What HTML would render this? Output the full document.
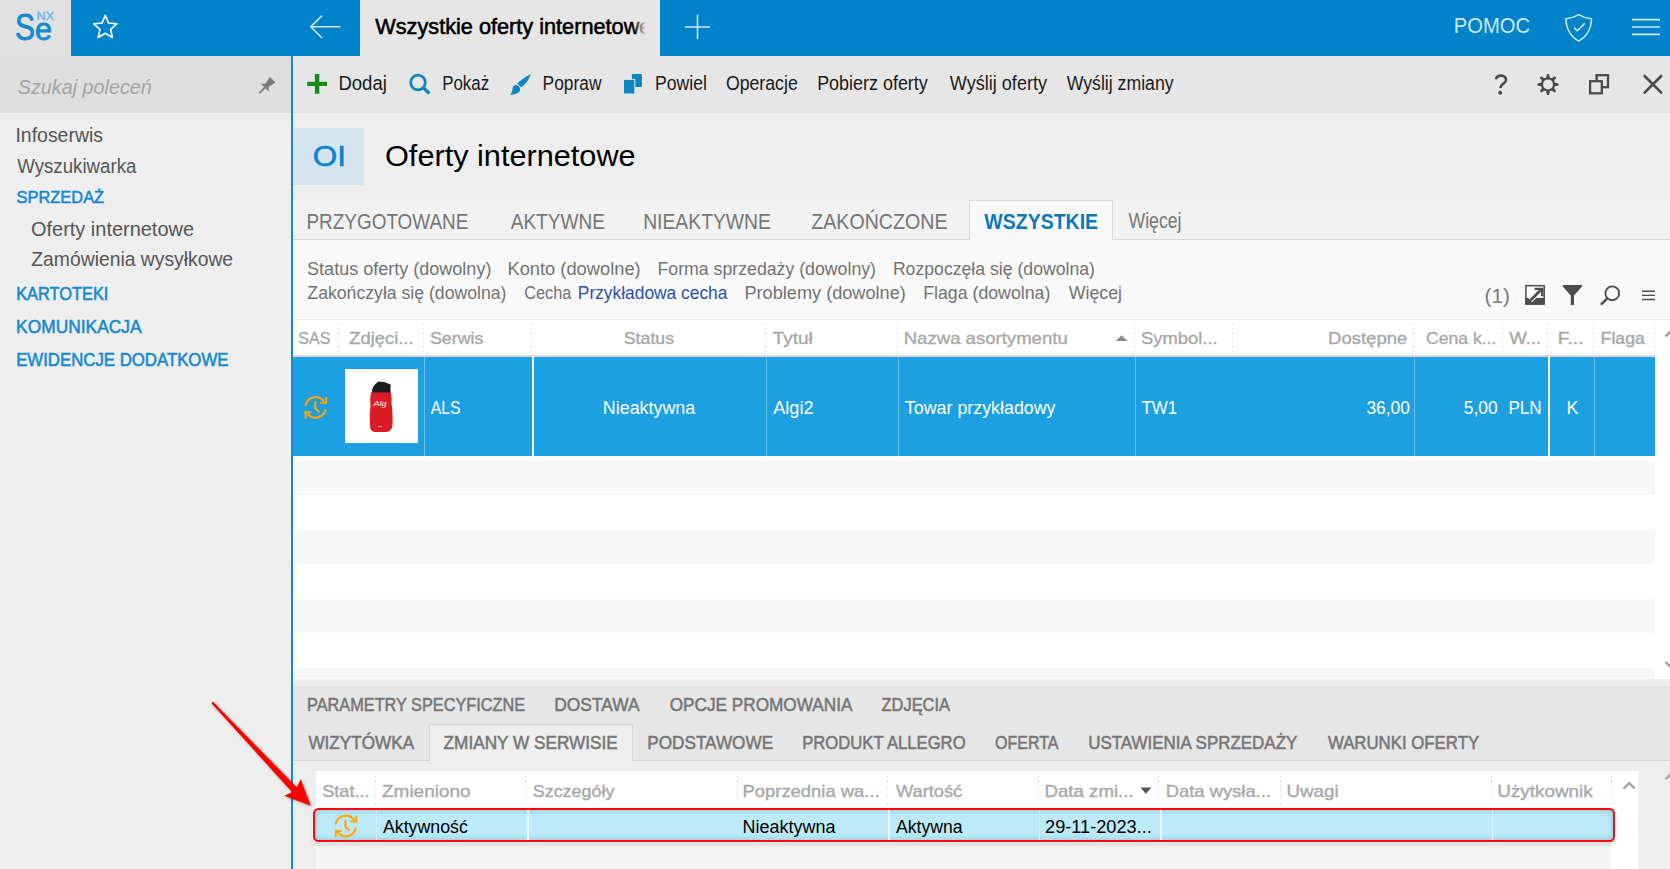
<!DOCTYPE html>
<html><head><meta charset="utf-8">
<style>
*{margin:0;padding:0;box-sizing:border-box}
html,body{width:1670px;height:869px;overflow:hidden;background:#eeeeee;font-family:"Liberation Sans",sans-serif;position:relative}
.a{position:absolute}
svg text{font-family:"Liberation Sans",sans-serif}
</style></head><body>
<div class="a" style="left:0;top:0;width:71px;height:56px;background:#e1e1e1"></div>
<div class="a" style="left:71px;top:0;width:289px;height:56px;background:#0083c9"></div>
<div class="a" style="left:360px;top:0;width:300px;height:56px;background:#e6e6e6"></div>
<div class="a" style="left:660px;top:0;width:1010px;height:56px;background:#0083c9"></div>
<div class="a" style="left:0;top:56px;width:291px;height:57px;background:#dedede"></div>
<div class="a" style="left:0;top:113px;width:291px;height:756px;background:#eeeeee"></div>
<div class="a" style="left:291px;top:56px;width:2px;height:813px;background:#1b87c5"></div>
<div class="a" style="left:293px;top:56px;width:1377px;height:57px;background:#e6e6e6"></div>
<div class="a" style="left:293px;top:113px;width:1377px;height:87px;background:#eeeeee"></div>
<div class="a" style="left:293px;top:128px;width:71px;height:57px;background:#d6e4ee"></div>
<div class="a" style="left:293px;top:200px;width:1377px;height:40px;background:#f2f2f2"></div>
<div class="a" style="left:293px;top:239px;width:1377px;height:1px;background:#d9d9d9"></div>
<div class="a" style="left:969px;top:200px;width:144px;height:40px;background:#f9f9f9;border:1px solid #d9d9d9;border-bottom:none"></div>
<div class="a" style="left:293px;top:240px;width:1377px;height:79px;background:#f9f9f9"></div>
<div class="a" style="left:293px;top:319px;width:1377px;height:1px;background:#e8e8e8"></div>
<div class="a" style="left:293px;top:320px;width:1377px;height:359px;background:#ffffff"></div>
<div class="a" style="left:293px;top:355px;width:1362px;height:2px;background:#dadada"></div>
<div class="a" style="left:338px;top:324px;width:1px;height:28px;background:repeating-linear-gradient(to bottom,#cbcbcb 0,#cbcbcb 1px,transparent 1px,transparent 4.5px)"></div>
<div class="a" style="left:423px;top:324px;width:1px;height:28px;background:repeating-linear-gradient(to bottom,#cbcbcb 0,#cbcbcb 1px,transparent 1px,transparent 4.5px)"></div>
<div class="a" style="left:531px;top:324px;width:1px;height:28px;background:repeating-linear-gradient(to bottom,#cbcbcb 0,#cbcbcb 1px,transparent 1px,transparent 4.5px)"></div>
<div class="a" style="left:765px;top:324px;width:1px;height:28px;background:repeating-linear-gradient(to bottom,#cbcbcb 0,#cbcbcb 1px,transparent 1px,transparent 4.5px)"></div>
<div class="a" style="left:897px;top:324px;width:1px;height:28px;background:repeating-linear-gradient(to bottom,#cbcbcb 0,#cbcbcb 1px,transparent 1px,transparent 4.5px)"></div>
<div class="a" style="left:1134px;top:324px;width:1px;height:28px;background:repeating-linear-gradient(to bottom,#cbcbcb 0,#cbcbcb 1px,transparent 1px,transparent 4.5px)"></div>
<div class="a" style="left:1232px;top:324px;width:1px;height:28px;background:repeating-linear-gradient(to bottom,#cbcbcb 0,#cbcbcb 1px,transparent 1px,transparent 4.5px)"></div>
<div class="a" style="left:1413px;top:324px;width:1px;height:28px;background:repeating-linear-gradient(to bottom,#cbcbcb 0,#cbcbcb 1px,transparent 1px,transparent 4.5px)"></div>
<div class="a" style="left:1502px;top:324px;width:1px;height:28px;background:repeating-linear-gradient(to bottom,#cbcbcb 0,#cbcbcb 1px,transparent 1px,transparent 4.5px)"></div>
<div class="a" style="left:1547px;top:324px;width:1px;height:28px;background:repeating-linear-gradient(to bottom,#cbcbcb 0,#cbcbcb 1px,transparent 1px,transparent 4.5px)"></div>
<div class="a" style="left:1593px;top:324px;width:1px;height:28px;background:repeating-linear-gradient(to bottom,#cbcbcb 0,#cbcbcb 1px,transparent 1px,transparent 4.5px)"></div>
<div class="a" style="left:1654px;top:324px;width:1px;height:28px;background:repeating-linear-gradient(to bottom,#cbcbcb 0,#cbcbcb 1px,transparent 1px,transparent 4.5px)"></div>
<div class="a" style="left:293px;top:357px;width:1362px;height:99px;background:#1da0e1"></div>
<div class="a" style="left:424px;top:357px;width:1px;height:99px;background:#6ec0ec"></div>
<div class="a" style="left:766px;top:357px;width:1px;height:99px;background:#6ec0ec"></div>
<div class="a" style="left:898px;top:357px;width:1px;height:99px;background:#6ec0ec"></div>
<div class="a" style="left:1135px;top:357px;width:1px;height:99px;background:#6ec0ec"></div>
<div class="a" style="left:1414px;top:357px;width:1px;height:99px;background:#6ec0ec"></div>
<div class="a" style="left:1594px;top:357px;width:1px;height:99px;background:#6ec0ec"></div>
<div class="a" style="left:532px;top:357px;width:2px;height:99px;background:#ffffff"></div>
<div class="a" style="left:1548px;top:357px;width:2px;height:99px;background:#ffffff"></div>
<div class="a" style="left:294px;top:461px;width:1361px;height:34px;background:#f7f7f7"></div>
<div class="a" style="left:294px;top:530px;width:1361px;height:34px;background:#f7f7f7"></div>
<div class="a" style="left:294px;top:599px;width:1361px;height:34px;background:#f7f7f7"></div>
<div class="a" style="left:294px;top:668px;width:1361px;height:11px;background:#f7f7f7"></div>
<div class="a" style="left:345px;top:369px;width:73px;height:74px;background:#ffffff"></div>
<svg class="a" style="left:345px;top:369px" width="73" height="74" viewBox="0 0 73 74"><path d="M27 24 Q26.5 17 33.5 12.5 Q40 12.3 45.8 15.8 Q45.2 19 45.6 24 Z" fill="#1d1d1d"/><path d="M26 23.5 L46 23.5 Q47 30 46.5 35 Q48 44 47.5 56 Q47 62.5 41 63 L30 63 Q25 62.5 25 57 Q24 46 25.5 36 Q24.5 30 26 23.5 Z" fill="#dc1c24"/><text x="28.5" y="37" font-size="8" fill="#fff" font-style="italic" font-family="Liberation Sans" textLength="13" lengthAdjust="spacingAndGlyphs">Alg</text><rect x="33" y="57" width="4" height="1" fill="#f3b0b0"/></svg>
<div class="a" style="left:293px;top:679px;width:1377px;height:7px;background:#eeeeee"></div>
<div class="a" style="left:293px;top:686px;width:1377px;height:74px;background:#e6e6e6"></div>
<div class="a" style="left:293px;top:760px;width:1377px;height:109px;background:#eeeeee"></div>
<div class="a" style="left:293px;top:760px;width:137px;height:1px;background:#d6d6d6"></div>
<div class="a" style="left:632px;top:760px;width:1038px;height:1px;background:#d6d6d6"></div>
<div class="a" style="left:429px;top:724px;width:204px;height:37px;background:#eeeeee;border:1px solid #d6d6d6;border-bottom:none"></div>
<div class="a" style="left:316px;top:771px;width:1322px;height:98px;background:#f5f5f5"></div>
<div class="a" style="left:316px;top:771px;width:1322px;height:36px;background:#ffffff"></div>
<div class="a" style="left:1611px;top:771px;width:27px;height:98px;background:#ffffff"></div>
<div class="a" style="left:375px;top:776px;width:1px;height:28px;background:repeating-linear-gradient(to bottom,#cbcbcb 0,#cbcbcb 1px,transparent 1px,transparent 4.5px)"></div>
<div class="a" style="left:525px;top:776px;width:1px;height:28px;background:repeating-linear-gradient(to bottom,#cbcbcb 0,#cbcbcb 1px,transparent 1px,transparent 4.5px)"></div>
<div class="a" style="left:737px;top:776px;width:1px;height:28px;background:repeating-linear-gradient(to bottom,#cbcbcb 0,#cbcbcb 1px,transparent 1px,transparent 4.5px)"></div>
<div class="a" style="left:887px;top:776px;width:1px;height:28px;background:repeating-linear-gradient(to bottom,#cbcbcb 0,#cbcbcb 1px,transparent 1px,transparent 4.5px)"></div>
<div class="a" style="left:1038px;top:776px;width:1px;height:28px;background:repeating-linear-gradient(to bottom,#cbcbcb 0,#cbcbcb 1px,transparent 1px,transparent 4.5px)"></div>
<div class="a" style="left:1158px;top:776px;width:1px;height:28px;background:repeating-linear-gradient(to bottom,#cbcbcb 0,#cbcbcb 1px,transparent 1px,transparent 4.5px)"></div>
<div class="a" style="left:1280px;top:776px;width:1px;height:28px;background:repeating-linear-gradient(to bottom,#cbcbcb 0,#cbcbcb 1px,transparent 1px,transparent 4.5px)"></div>
<div class="a" style="left:1491px;top:776px;width:1px;height:28px;background:repeating-linear-gradient(to bottom,#cbcbcb 0,#cbcbcb 1px,transparent 1px,transparent 4.5px)"></div>
<div class="a" style="left:1611px;top:776px;width:1px;height:28px;background:repeating-linear-gradient(to bottom,#cbcbcb 0,#cbcbcb 1px,transparent 1px,transparent 4.5px)"></div>
<div class="a" style="left:313px;top:808px;width:1302px;height:34px;border:2.3px solid #ff0505;border-radius:5.5px;background:#bdeaf9;box-shadow:inset 0 0 5px 1px rgba(100,170,200,0.5),0 0 1px 1px rgba(255,255,255,0.6),0 3px 5px rgba(0,0,0,0.12)"></div>
<div class="a" style="left:376px;top:810px;width:1px;height:30px;background:#d6eef8"></div>
<div class="a" style="left:1039px;top:810px;width:1px;height:30px;background:#d6eef8"></div>
<div class="a" style="left:1492px;top:810px;width:1px;height:30px;background:#d6eef8"></div>
<div class="a" style="left:527px;top:810px;width:2px;height:30px;background:#eef8fc"></div>
<div class="a" style="left:888px;top:810px;width:2px;height:30px;background:#eef8fc"></div>
<div class="a" style="left:1160px;top:810px;width:2px;height:30px;background:#eef8fc"></div>
<svg class="a" style="left:0;top:0" width="1670" height="869" viewBox="0 0 1670 869">
<text x="15.0" y="39.6" font-size="36.5" fill="#1589d0" stroke="#1589d0" stroke-width="0.8" textLength="20" lengthAdjust="spacingAndGlyphs">S</text>
<text x="35.0" y="39.6" font-size="31" fill="#1589d0" stroke="#1589d0" stroke-width="0.8" textLength="17" lengthAdjust="spacingAndGlyphs">e</text>
<text x="36.6" y="20.2" font-size="10.8" fill="#6db8e6" stroke="#6db8e6" stroke-width="0.4" textLength="17.6" lengthAdjust="spacingAndGlyphs">NX</text>
<polygon points="105.30,15.40 108.59,23.07 116.90,23.83 110.63,29.33 112.47,37.47 105.30,33.20 98.13,37.47 99.97,29.33 93.70,23.83 102.01,23.07" fill="none" stroke="#ffffff" stroke-width="1.6" stroke-linejoin="round"/>
<path d="M310.8,26.8 L340.6,26.8 M322,15.6 L310.8,26.8 L322,38" fill="none" stroke="#d2e8f6" stroke-width="1.5"/>
<path d="M685,27 L710,27 M697.5,14.7 L697.5,39.1" fill="none" stroke="#d2e8f6" stroke-width="1.5"/>
<path d="M1578.7,14.6 Q1572.5,18.3 1565.9,18.8 C1566.2,30 1571,36.8 1578.7,41 C1586.4,36.8 1591.2,30 1591.5,18.8 Q1584.9,18.3 1578.7,14.6 Z" fill="none" stroke="#d2e8f6" stroke-width="1.5" stroke-linejoin="round"/>
<path d="M1574.1,27.6 L1577.4,30.7 L1584.7,23.4" fill="none" stroke="#d2e8f6" stroke-width="1.5"/>
<path d="M1632,19.6 L1660,19.6 M1632,27 L1660,27 M1632,34.4 L1660,34.4" stroke="#d2e8f6" stroke-width="1.7"/>
<g transform="translate(272.5,79.9) rotate(45)" fill="#7a7a7a"><path d="M-3.9,-0.3 L3.9,-0.3 L2.3,7.8 L5.6,10.9 L-5.6,10.9 L-2.3,7.8 Z"/><rect x="-0.95" y="10" width="1.9" height="8.6"/></g>
<path d="M307.2,83.9 L327,83.9 M317.1,74 L317.1,93.7" stroke="#168a16" stroke-width="4.4"/>
<circle cx="418" cy="82.5" r="7.3" fill="none" stroke="#0e86be" stroke-width="2.8"/><path d="M423.3,87.6 L429.3,93.5" stroke="#0e86be" stroke-width="3.4"/>
<path d="M530.8,74.2 Q522.5,77.8 517.3,83.7 L521.3,87.3 Q528,82.3 530.8,74.2 Z" fill="#0e86be"/><path d="M515.2,85.1 C518,84.8 520.6,87.2 520.1,90.2 C519.6,93 514.5,94.8 509.9,94.8 C511.6,93.3 512.2,91.5 512.4,89.5 C512.6,87.3 513.3,85.4 515.2,85.1 Z" fill="#0e86be"/>
<rect x="631.9" y="74" width="10" height="13" fill="#0e86be"/><rect x="623" y="78.9" width="12.3" height="15.6" fill="#e6e6e6"/><rect x="624" y="79.9" width="10.3" height="13.6" fill="#0e86be"/>
<path d="M1496,79.3 C1496.4,76.7 1498.4,75.6 1501,75.6 C1504.3,75.6 1506.1,77.6 1506.1,80 C1506.1,83.4 1500.4,84 1500.4,88" fill="none" stroke="#4a4a4a" stroke-width="2.6"/><circle cx="1500.2" cy="92.8" r="2" fill="#4a4a4a"/>
<g transform="translate(1548,84.4)" fill="#4a4a4a"><path d="M-2.0,-6.0 L-1.0,-10.5 L1.0,-10.5 L2.0,-6.0 Z" transform="rotate(0)"/><path d="M-2.0,-6.0 L-1.0,-10.5 L1.0,-10.5 L2.0,-6.0 Z" transform="rotate(45)"/><path d="M-2.0,-6.0 L-1.0,-10.5 L1.0,-10.5 L2.0,-6.0 Z" transform="rotate(90)"/><path d="M-2.0,-6.0 L-1.0,-10.5 L1.0,-10.5 L2.0,-6.0 Z" transform="rotate(135)"/><path d="M-2.0,-6.0 L-1.0,-10.5 L1.0,-10.5 L2.0,-6.0 Z" transform="rotate(180)"/><path d="M-2.0,-6.0 L-1.0,-10.5 L1.0,-10.5 L2.0,-6.0 Z" transform="rotate(225)"/><path d="M-2.0,-6.0 L-1.0,-10.5 L1.0,-10.5 L2.0,-6.0 Z" transform="rotate(270)"/><path d="M-2.0,-6.0 L-1.0,-10.5 L1.0,-10.5 L2.0,-6.0 Z" transform="rotate(315)"/><circle r="6.05" fill="none" stroke="#4a4a4a" stroke-width="2.1"/></g>
<rect x="1596.6" y="75.2" width="11.4" height="12" fill="none" stroke="#4a4a4a" stroke-width="2.3"/><rect x="1590.1" y="81.2" width="11.7" height="12.1" fill="#e6e6e6" stroke="#4a4a4a" stroke-width="2.3"/>
<path d="M1644.6,76 L1661.2,92.6 M1661.2,76 L1644.6,92.6" stroke="#4a4a4a" stroke-width="2.6" stroke-linecap="round"/>
<rect x="1525.9" y="285.7" width="18.3" height="18.3" fill="#ffffff" stroke="#4d4d4d" stroke-width="1.5"/><rect x="1525.2" y="297.9" width="19.7" height="6.8" fill="#4d4d4d"/><path d="M1530.3,300.4 L1540.5,290.3" stroke="#ffffff" stroke-width="5"/><path d="M1530.3,300.4 L1540.5,290.3" stroke="#4d4d4d" stroke-width="2.8"/><path d="M1534.6,288.9 L1542.2,288.9 L1542.2,296.3" fill="none" stroke="#4d4d4d" stroke-width="2.4"/>
<path d="M1562.8,285 L1582,285 L1582,286.5 L1574,295.5 L1574,305 L1570.8,305 L1570.8,295.5 L1562.8,286.5 Z" fill="#4d4d4d"/>
<circle cx="1612.3" cy="293.3" r="6.9" fill="none" stroke="#4d4d4d" stroke-width="1.9"/><path d="M1607.3,298.4 L1601,304.6" stroke="#4d4d4d" stroke-width="2.4"/>
<path d="M1642,291.3 L1655,291.3 M1642,295.4 L1655,295.4 M1642,299.5 L1655,299.5" stroke="#4d4d4d" stroke-width="1.4"/>
<path d="M1115.7,341.1 L1121.55,335.2 L1127.4,341.1 Z" fill="#8a8a8a"/>
<path d="M1140.3,787.5 L1151.5,787.5 L1145.9,793.8 Z" fill="#555555"/>
<g transform="translate(298,390) scale(1.0)"><g fill="none" stroke="#ffa500" stroke-width="2.1"><path d="M7.4,16.0 A10.3,10.3 0 0 1 25.9,11.4"/><path d="M27.7,19.3 A10.3,10.3 0 0 1 9.6,23.9"/><path d="M17.2,11.2 L17.2,18.2 L21.4,22.3"/></g><g fill="#ffa500"><rect x="27.1" y="7" width="1.95" height="6.9"/><rect x="22.2" y="12" width="6.85" height="1.9"/><rect x="6.6" y="21.5" width="2.05" height="7.1"/><rect x="6.6" y="21.5" width="6.7" height="1.85"/></g></g>
<g transform="translate(328.2,808.5) scale(1.0)"><g fill="none" stroke="#ffa500" stroke-width="2.1"><path d="M7.4,16.0 A10.3,10.3 0 0 1 25.9,11.4"/><path d="M27.7,19.3 A10.3,10.3 0 0 1 9.6,23.9"/><path d="M17.2,11.2 L17.2,18.2 L21.4,22.3"/></g><g fill="#ffa500"><rect x="27.1" y="7" width="1.95" height="6.9"/><rect x="22.2" y="12" width="6.85" height="1.9"/><rect x="6.6" y="21.5" width="2.05" height="7.1"/><rect x="6.6" y="21.5" width="6.7" height="1.85"/></g></g>
<path d="M1665.6,336.6 L1671.5,330" fill="none" stroke="#a0a0a0" stroke-width="2.3"/>
<path d="M1665.6,662 L1671.5,668" fill="none" stroke="#a0a0a0" stroke-width="2.3"/>
<path d="M1623.6,788.6 L1629.2,783 L1634.8,788.6" fill="none" stroke="#a3a3a3" stroke-width="2.2"/>
<path d="M1665.6,779.2 L1671.5,773" fill="none" stroke="#a8a8a8" stroke-width="2.3"/>
<g style="filter:drop-shadow(1px 1.5px 1.5px rgba(0,0,0,0.35))"><path d="M213.7,702.4 L296.8,787.2 L300.7,779.2 L310.8,805.8 L284.2,795.8 L292.2,792.2 L212.1,704 Z" fill="#ff0000"/><circle cx="212.9" cy="703.2" r="1.15" fill="#ff0000"/></g>
<text x="375.30" y="33.70" font-size="21.30" textLength="276.07" lengthAdjust="spacingAndGlyphs" fill="#000000" stroke="#000000" stroke-width="0.55">Wszystkie oferty internetowe</text>
<text x="1453.78" y="33.00" font-size="21.74" textLength="76.28" lengthAdjust="spacingAndGlyphs" fill="#cfe6f5">POMOC</text>
<text x="338.42" y="90.10" font-size="19.57" textLength="48.44" lengthAdjust="spacingAndGlyphs" fill="#1a1a1a">Dodaj</text>
<text x="442.15" y="90.10" font-size="19.57" textLength="47.00" lengthAdjust="spacingAndGlyphs" fill="#1a1a1a">Pokaż</text>
<text x="542.61" y="90.10" font-size="19.57" textLength="58.92" lengthAdjust="spacingAndGlyphs" fill="#1a1a1a">Popraw</text>
<text x="654.99" y="90.10" font-size="19.57" textLength="51.88" lengthAdjust="spacingAndGlyphs" fill="#1a1a1a">Powiel</text>
<text x="725.90" y="90.10" font-size="19.57" textLength="71.85" lengthAdjust="spacingAndGlyphs" fill="#1a1a1a">Operacje</text>
<text x="817.17" y="90.10" font-size="19.57" textLength="110.63" lengthAdjust="spacingAndGlyphs" fill="#1a1a1a">Pobierz oferty</text>
<text x="949.80" y="90.10" font-size="19.57" textLength="97.21" lengthAdjust="spacingAndGlyphs" fill="#1a1a1a">Wyślij oferty</text>
<text x="1066.70" y="90.10" font-size="19.57" textLength="106.94" lengthAdjust="spacingAndGlyphs" fill="#1a1a1a">Wyślij zmiany</text>
<text x="17.71" y="93.50" font-size="20.72" textLength="134.13" lengthAdjust="spacingAndGlyphs" fill="#a3a3a3" font-style="italic">Szukaj poleceń</text>
<text x="15.45" y="142.00" font-size="20.14" textLength="87.56" lengthAdjust="spacingAndGlyphs" fill="#555555">Infoserwis</text>
<text x="17.20" y="172.90" font-size="19.71" textLength="119.23" lengthAdjust="spacingAndGlyphs" fill="#555555">Wyszukiwarka</text>
<text x="16.46" y="203.30" font-size="17.39" textLength="87.72" lengthAdjust="spacingAndGlyphs" fill="#1589d0" stroke="#1589d0" stroke-width="0.55">SPRZEDAŻ</text>
<text x="31.00" y="236.10" font-size="20.14" textLength="163.01" lengthAdjust="spacingAndGlyphs" fill="#555555">Oferty internetowe</text>
<text x="31.32" y="265.60" font-size="19.71" textLength="201.81" lengthAdjust="spacingAndGlyphs" fill="#555555">Zamówienia wysyłkowe</text>
<text x="16.19" y="299.70" font-size="17.68" textLength="92.23" lengthAdjust="spacingAndGlyphs" fill="#1589d0" stroke="#1589d0" stroke-width="0.55">KARTOTEKI</text>
<text x="16.11" y="332.70" font-size="17.68" textLength="125.45" lengthAdjust="spacingAndGlyphs" fill="#1589d0" stroke="#1589d0" stroke-width="0.55">KOMUNIKACJA</text>
<text x="16.16" y="365.80" font-size="17.68" textLength="212.28" lengthAdjust="spacingAndGlyphs" fill="#1589d0" stroke="#1589d0" stroke-width="0.55">EWIDENCJE DODATKOWE</text>
<text x="312.88" y="165.60" font-size="28.84" textLength="33.21" lengthAdjust="spacingAndGlyphs" fill="#0a84cc" stroke="#0a84cc" stroke-width="0.55">OI</text>
<text x="385.02" y="165.60" font-size="30.29" textLength="250.62" lengthAdjust="spacingAndGlyphs" fill="#000000">Oferty internetowe</text>
<text x="306.49" y="229.30" font-size="22.32" textLength="161.90" lengthAdjust="spacingAndGlyphs" fill="#767676">PRZYGOTOWANE</text>
<text x="510.70" y="229.30" font-size="22.32" textLength="94.26" lengthAdjust="spacingAndGlyphs" fill="#767676">AKTYWNE</text>
<text x="643.15" y="229.30" font-size="22.32" textLength="127.76" lengthAdjust="spacingAndGlyphs" fill="#767676">NIEAKTYWNE</text>
<text x="811.31" y="229.30" font-size="22.32" textLength="136.17" lengthAdjust="spacingAndGlyphs" fill="#767676">ZAKOŃCZONE</text>
<text x="984.30" y="228.80" font-size="21.59" textLength="113.85" lengthAdjust="spacingAndGlyphs" fill="#0a7ab8" font-weight="bold">WSZYSTKIE</text>
<text x="1128.50" y="228.20" font-size="21.16" textLength="52.96" lengthAdjust="spacingAndGlyphs" fill="#767676">Więcej</text>
<text x="307.09" y="274.80" font-size="18.70" textLength="184.33" lengthAdjust="spacingAndGlyphs" fill="#737373">Status oferty (dowolny)</text>
<text x="507.44" y="274.80" font-size="18.70" textLength="133.22" lengthAdjust="spacingAndGlyphs" fill="#737373">Konto (dowolne)</text>
<text x="657.48" y="274.80" font-size="18.70" textLength="218.54" lengthAdjust="spacingAndGlyphs" fill="#737373">Forma sprzedaży (dowolny)</text>
<text x="892.89" y="274.80" font-size="18.70" textLength="202.09" lengthAdjust="spacingAndGlyphs" fill="#737373">Rozpoczęła się (dowolna)</text>
<text x="307.37" y="298.50" font-size="18.70" textLength="199.15" lengthAdjust="spacingAndGlyphs" fill="#737373">Zakończyła się (dowolna)</text>
<text x="524.28" y="298.50" font-size="18.70" textLength="47.15" lengthAdjust="spacingAndGlyphs" fill="#737373">Cecha</text>
<text x="577.81" y="298.50" font-size="18.70" textLength="149.61" lengthAdjust="spacingAndGlyphs" fill="#2a50b4">Przykładowa cecha</text>
<text x="744.45" y="298.50" font-size="18.70" textLength="161.40" lengthAdjust="spacingAndGlyphs" fill="#737373">Problemy (dowolne)</text>
<text x="923.18" y="298.50" font-size="18.70" textLength="127.21" lengthAdjust="spacingAndGlyphs" fill="#737373">Flaga (dowolna)</text>
<text x="1068.70" y="298.50" font-size="18.70" textLength="53.26" lengthAdjust="spacingAndGlyphs" fill="#737373">Więcej</text>
<text x="1484.56" y="302.90" font-size="19.42" textLength="25.22" lengthAdjust="spacingAndGlyphs" fill="#7a7a7a">(1)</text>
<text x="298.28" y="344.40" font-size="17.39" textLength="32.08" lengthAdjust="spacingAndGlyphs" fill="#a9a9a9" stroke="#a9a9a9" stroke-width="0.4">SAS</text>
<text x="349.35" y="344.40" font-size="17.39" textLength="64.23" lengthAdjust="spacingAndGlyphs" fill="#a9a9a9" stroke="#a9a9a9" stroke-width="0.4">Zdjęci...</text>
<text x="429.90" y="344.40" font-size="17.39" textLength="53.54" lengthAdjust="spacingAndGlyphs" fill="#a9a9a9" stroke="#a9a9a9" stroke-width="0.4">Serwis</text>
<text x="623.80" y="344.40" font-size="17.39" textLength="50.22" lengthAdjust="spacingAndGlyphs" fill="#a9a9a9" stroke="#a9a9a9" stroke-width="0.4">Status</text>
<text x="772.82" y="344.40" font-size="17.39" textLength="40.01" lengthAdjust="spacingAndGlyphs" fill="#a9a9a9" stroke="#a9a9a9" stroke-width="0.4">Tytuł</text>
<text x="903.72" y="344.40" font-size="17.39" textLength="164.03" lengthAdjust="spacingAndGlyphs" fill="#a9a9a9" stroke="#a9a9a9" stroke-width="0.4">Nazwa asortymentu</text>
<text x="1140.97" y="344.40" font-size="17.39" textLength="76.65" lengthAdjust="spacingAndGlyphs" fill="#a9a9a9" stroke="#a9a9a9" stroke-width="0.4">Symbol...</text>
<text x="1328.12" y="344.40" font-size="17.39" textLength="79.13" lengthAdjust="spacingAndGlyphs" fill="#a9a9a9" stroke="#a9a9a9" stroke-width="0.4">Dostępne</text>
<text x="1426.12" y="344.40" font-size="17.39" textLength="70.20" lengthAdjust="spacingAndGlyphs" fill="#a9a9a9" stroke="#a9a9a9" stroke-width="0.4">Cena k...</text>
<text x="1509.30" y="344.40" font-size="17.39" textLength="31.91" lengthAdjust="spacingAndGlyphs" fill="#a9a9a9" stroke="#a9a9a9" stroke-width="0.4">W...</text>
<text x="1557.86" y="344.40" font-size="17.39" textLength="25.64" lengthAdjust="spacingAndGlyphs" fill="#a9a9a9" stroke="#a9a9a9" stroke-width="0.4">F...</text>
<text x="1600.58" y="344.40" font-size="17.39" textLength="44.36" lengthAdjust="spacingAndGlyphs" fill="#a9a9a9" stroke="#a9a9a9" stroke-width="0.4">Flaga</text>
<text x="430.80" y="414.20" font-size="19.13" textLength="29.84" lengthAdjust="spacingAndGlyphs" fill="#ffffff">ALS</text>
<text x="602.87" y="414.20" font-size="19.13" textLength="92.32" lengthAdjust="spacingAndGlyphs" fill="#ffffff">Nieaktywna</text>
<text x="773.20" y="414.20" font-size="19.13" textLength="40.39" lengthAdjust="spacingAndGlyphs" fill="#ffffff">Algi2</text>
<text x="904.84" y="414.20" font-size="19.13" textLength="150.71" lengthAdjust="spacingAndGlyphs" fill="#ffffff">Towar przykładowy</text>
<text x="1141.46" y="414.20" font-size="19.13" textLength="35.71" lengthAdjust="spacingAndGlyphs" fill="#ffffff">TW1</text>
<text x="1366.39" y="414.20" font-size="19.13" textLength="43.46" lengthAdjust="spacingAndGlyphs" fill="#ffffff">36,00</text>
<text x="1463.80" y="414.20" font-size="19.13" textLength="33.83" lengthAdjust="spacingAndGlyphs" fill="#ffffff">5,00</text>
<text x="1508.43" y="414.20" font-size="19.13" textLength="33.26" lengthAdjust="spacingAndGlyphs" fill="#ffffff">PLN</text>
<text x="1566.57" y="414.20" font-size="19.13" textLength="11.96" lengthAdjust="spacingAndGlyphs" fill="#ffffff">K</text>
<text x="307.10" y="710.60" font-size="18.55" textLength="217.99" lengthAdjust="spacingAndGlyphs" fill="#767676" stroke="#767676" stroke-width="0.55">PARAMETRY SPECYFICZNE</text>
<text x="554.31" y="710.60" font-size="18.55" textLength="85.23" lengthAdjust="spacingAndGlyphs" fill="#767676" stroke="#767676" stroke-width="0.55">DOSTAWA</text>
<text x="669.73" y="710.60" font-size="18.55" textLength="182.68" lengthAdjust="spacingAndGlyphs" fill="#767676" stroke="#767676" stroke-width="0.55">OPCJE PROMOWANIA</text>
<text x="881.51" y="710.60" font-size="18.55" textLength="68.53" lengthAdjust="spacingAndGlyphs" fill="#767676" stroke="#767676" stroke-width="0.55">ZDJĘCIA</text>
<text x="308.40" y="748.70" font-size="18.55" textLength="105.72" lengthAdjust="spacingAndGlyphs" fill="#767676" stroke="#767676" stroke-width="0.55">WIZYTÓWKA</text>
<text x="443.58" y="748.70" font-size="18.55" textLength="174.12" lengthAdjust="spacingAndGlyphs" fill="#767676" stroke="#767676" stroke-width="0.55">ZMIANY W SERWISIE</text>
<text x="647.23" y="748.70" font-size="18.55" textLength="125.91" lengthAdjust="spacingAndGlyphs" fill="#767676" stroke="#767676" stroke-width="0.55">PODSTAWOWE</text>
<text x="802.17" y="748.70" font-size="18.55" textLength="163.43" lengthAdjust="spacingAndGlyphs" fill="#767676" stroke="#767676" stroke-width="0.55">PRODUKT ALLEGRO</text>
<text x="994.98" y="748.70" font-size="18.55" textLength="63.58" lengthAdjust="spacingAndGlyphs" fill="#767676" stroke="#767676" stroke-width="0.55">OFERTA</text>
<text x="1088.23" y="748.70" font-size="18.55" textLength="209.12" lengthAdjust="spacingAndGlyphs" fill="#767676" stroke="#767676" stroke-width="0.55">USTAWIENIA SPRZEDAŻY</text>
<text x="1327.90" y="748.70" font-size="18.55" textLength="151.25" lengthAdjust="spacingAndGlyphs" fill="#767676" stroke="#767676" stroke-width="0.55">WARUNKI OFERTY</text>
<text x="322.18" y="796.90" font-size="17.39" textLength="47.40" lengthAdjust="spacingAndGlyphs" fill="#a9a9a9" stroke="#a9a9a9" stroke-width="0.4">Stat...</text>
<text x="382.03" y="796.90" font-size="17.39" textLength="88.51" lengthAdjust="spacingAndGlyphs" fill="#a9a9a9" stroke="#a9a9a9" stroke-width="0.4">Zmieniono</text>
<text x="532.79" y="796.90" font-size="17.39" textLength="81.56" lengthAdjust="spacingAndGlyphs" fill="#a9a9a9" stroke="#a9a9a9" stroke-width="0.4">Szczegóły</text>
<text x="742.53" y="796.90" font-size="17.39" textLength="137.11" lengthAdjust="spacingAndGlyphs" fill="#a9a9a9" stroke="#a9a9a9" stroke-width="0.4">Poprzednia wa...</text>
<text x="895.90" y="796.90" font-size="17.39" textLength="66.36" lengthAdjust="spacingAndGlyphs" fill="#a9a9a9" stroke="#a9a9a9" stroke-width="0.4">Wartość</text>
<text x="1044.51" y="796.90" font-size="17.39" textLength="89.15" lengthAdjust="spacingAndGlyphs" fill="#a9a9a9" stroke="#a9a9a9" stroke-width="0.4">Data zmi...</text>
<text x="1165.73" y="796.90" font-size="17.39" textLength="105.21" lengthAdjust="spacingAndGlyphs" fill="#a9a9a9" stroke="#a9a9a9" stroke-width="0.4">Data wysła...</text>
<text x="1286.49" y="796.90" font-size="17.39" textLength="52.20" lengthAdjust="spacingAndGlyphs" fill="#a9a9a9" stroke="#a9a9a9" stroke-width="0.4">Uwagi</text>
<text x="1497.18" y="796.90" font-size="17.39" textLength="95.56" lengthAdjust="spacingAndGlyphs" fill="#a9a9a9" stroke="#a9a9a9" stroke-width="0.4">Użytkownik</text>
<text x="382.90" y="833.20" font-size="18.12" textLength="84.93" lengthAdjust="spacingAndGlyphs" fill="#000000">Aktywność</text>
<text x="742.56" y="833.20" font-size="18.12" textLength="92.83" lengthAdjust="spacingAndGlyphs" fill="#000000">Nieaktywna</text>
<text x="896.00" y="833.20" font-size="18.12" textLength="66.50" lengthAdjust="spacingAndGlyphs" fill="#000000">Aktywna</text>
<text x="1045.09" y="833.20" font-size="18.12" textLength="106.74" lengthAdjust="spacingAndGlyphs" fill="#000000">29-11-2023...</text>
<defs><linearGradient id="fd" x1="0" x2="1"><stop offset="0" stop-color="#e6e6e6" stop-opacity="0"/><stop offset="1" stop-color="#e6e6e6"/></linearGradient></defs>
<rect x="634" y="10" width="12" height="36" fill="url(#fd)"/><rect x="646" y="10" width="14" height="36" fill="#e6e6e6"/>
</svg>
</body></html>
